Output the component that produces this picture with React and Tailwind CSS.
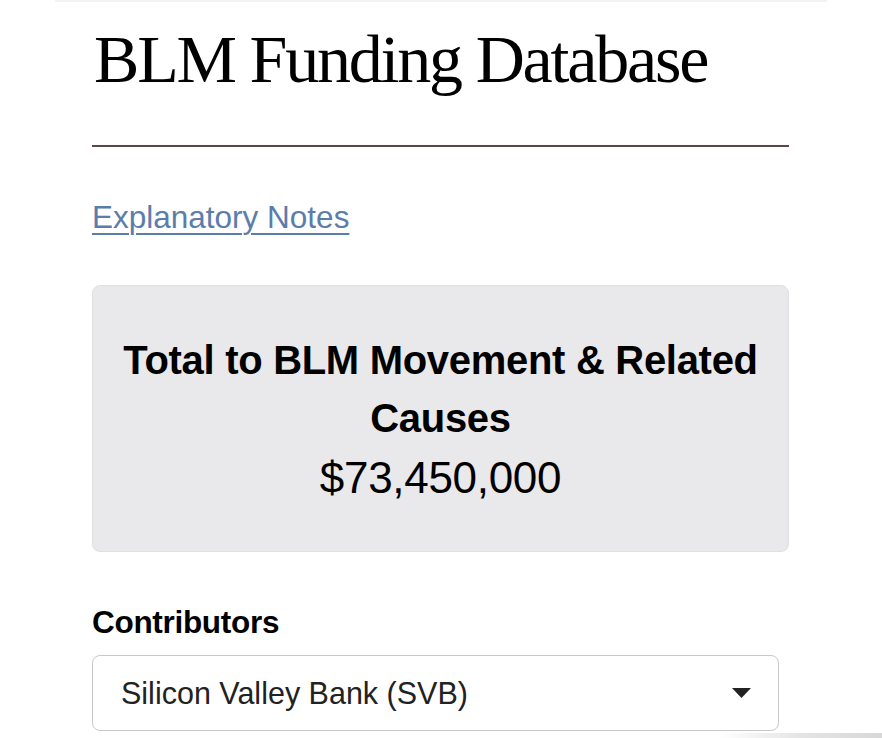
import React from 'react';

const sans = { fontFamily: '"Liberation Sans", Arial, Helvetica, sans-serif' };

const App = () => {
  return (
    <div className="min-h-screen bg-white text-black" style={sans}>
      <div className="mx-auto h-[2px] w-[772px] bg-[#f2f2ef]" />

      <div className="ml-[92px] w-[697px]">
        <h1 className="mt-[23px] pl-[2px] font-['Liberation_Serif',_'Times_New_Roman',_serif] text-[68px] leading-[68px] font-normal tracking-[-2.2px]">
          BLM Funding Database
        </h1>

        <div className="mt-[52px] h-[2px] w-full bg-[#5e4642]" />

        <a
          href="#notes"
          className="mt-[51px] inline-block text-[31.5px] leading-[38px] text-[#5b7dab] underline decoration-[1.5px] underline-offset-[5px]"
        >
          Explanatory Notes
        </a>

        <div className="mt-[49px] flex flex-col items-center rounded-[8px] border border-[#e0e0e2] bg-[#e9e9eb] px-[28px] pt-[45px] pb-[42px] text-center">
          <h2 className="text-[40px] leading-[58px] font-bold tracking-[-0.3px]">
            Total to BLM Movement &amp; Related Causes
          </h2>
          <p className="text-[44px] leading-[62px] font-normal tracking-[-0.3px]">$73,450,000</p>
        </div>

        <label className="mt-[51px] block text-[31.5px] leading-[38px] font-bold tracking-[-0.3px]">
          Contributors
        </label>

        <div className="mt-[14px] flex h-[76px] w-[687px] items-center justify-between rounded-[8px] border border-[#c8c8c8] bg-white pl-[28px] pr-[27px]">
          <span className="text-[30.5px] leading-[38px] text-[#222]">Silicon Valley Bank (SVB)</span>
          <svg width="19" height="10" viewBox="0 0 19 10" aria-hidden="true">
            <path d="M0 0 H19 L9.5 10 Z" fill="#222" />
          </svg>
        </div>
      </div>

      <div className="mt-[2px] ml-[720px] h-[6px] w-[162px] bg-gradient-to-r from-white via-[#e4e4e4] to-[#d8d8d8]" />
    </div>
  );
};

export default App;
